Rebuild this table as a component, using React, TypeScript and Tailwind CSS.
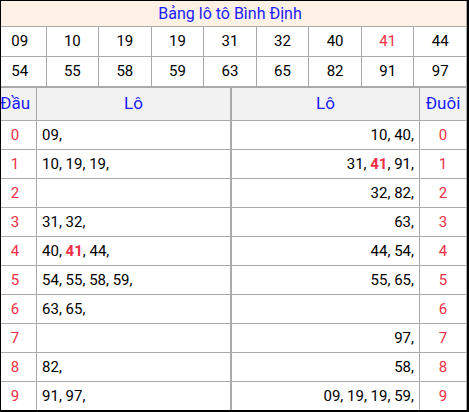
import React from "react";

const top = ["09", "10", "19", "19", "31", "32", "40", "41", "44", "54", "55", "58", "59", "63", "65", "82", "91", "97"];

const dau: string[][] = [
  ["09"],
  ["10", "19", "19"],
  [],
  ["31", "32"],
  ["40", "41", "44"],
  ["54", "55", "58", "59"],
  ["63", "65"],
  [],
  ["82"],
  ["91", "97"],
];

const duoi: string[][] = [
  ["10", "40"],
  ["31", "41", "91"],
  ["32", "82"],
  ["63"],
  ["44", "54"],
  ["55", "65"],
  [],
  ["97"],
  ["58"],
  ["09", "19", "19", "59"],
];

const hot = "41";

const Nums = ({ list }: { list: string[] }) => (
  <span>
    {list.map((n, i) => (
      <React.Fragment key={i}>
        {i > 0 && " "}
        <span className={n === hot ? "font-bold text-[#ee2f45]" : ""}>{n}</span>,
      </React.Fragment>
    ))}
  </span>
);

export default function App() {
  return (
    <div
      className="w-[469px] h-[412px] overflow-hidden border-l border-t border-r-2 border-b-2 border-black bg-white text-black"
      style={{ fontFamily: "Roboto, 'Liberation Sans', sans-serif" }}
    >
      <div className="-ml-[7px] w-[473px]">
        {/* tieu de */}
        <div className="h-[26px] border-b border-r border-[#aaaaaa] bg-[#fdf0e5] flex items-center justify-center text-[16px] text-[#1a1aff]">
          Bảng lô tô Bình Định
        </div>
        <div className="grid grid-cols-9">
          {top.map((n, i) => (
            <div
              key={i}
              className={`h-[30px] border-r border-b border-[#aaaaaa] flex items-center justify-center text-[15px] ${
                n === hot ? "text-[#ee2f45]" : ""
              }`}
            >
              {n}
            </div>
          ))}
        </div>

        {/* bang dau duoi */}
        <div className="border-t border-[#aaaaaa] grid grid-cols-[43px_195px_188px_47px]">
          <div className="h-[33px] border-r border-b border-[#aaaaaa] bg-[#f2f2f2] flex items-center justify-center text-[17px] text-[#1a1aff]">
            Đầu
          </div>
          <div className="h-[33px] border-r-2 border-b border-[#aaaaaa] bg-[#f2f2f2] flex items-center justify-center text-[17px] text-[#1a1aff]">
            Lô
          </div>
          <div className="h-[33px] border-r border-b border-[#aaaaaa] bg-[#f2f2f2] flex items-center justify-center text-[17px] text-[#1a1aff]">
            Lô
          </div>
          <div className="h-[33px] border-r border-b border-[#aaaaaa] bg-[#f2f2f2] flex items-center justify-center text-[17px] text-[#1a1aff]">
            Đuôi
          </div>

          {dau.map((row, i) => {
            const b = i < 9 ? "h-[29px] border-b" : "h-[28px]";
            return (
              <React.Fragment key={i}>
                <div className={`${b} border-r border-[#aaaaaa] flex items-center justify-center text-[15px] text-[#ee2f45]`}>
                  {i}
                </div>
                <div className={`${b} border-r-2 border-[#aaaaaa] flex items-center pl-[5px] text-[15px]`}>
                  <Nums list={row} />
                </div>
                <div className={`${b} border-r border-[#aaaaaa] flex items-center justify-end pr-[5px] text-[15px]`}>
                  <Nums list={duoi[i]} />
                </div>
                <div className={`${b} border-r border-[#aaaaaa] flex items-center justify-center text-[15px] text-[#ee2f45]`}>
                  {i}
                </div>
              </React.Fragment>
            );
          })}
        </div>
      </div>
    </div>
  );
}
